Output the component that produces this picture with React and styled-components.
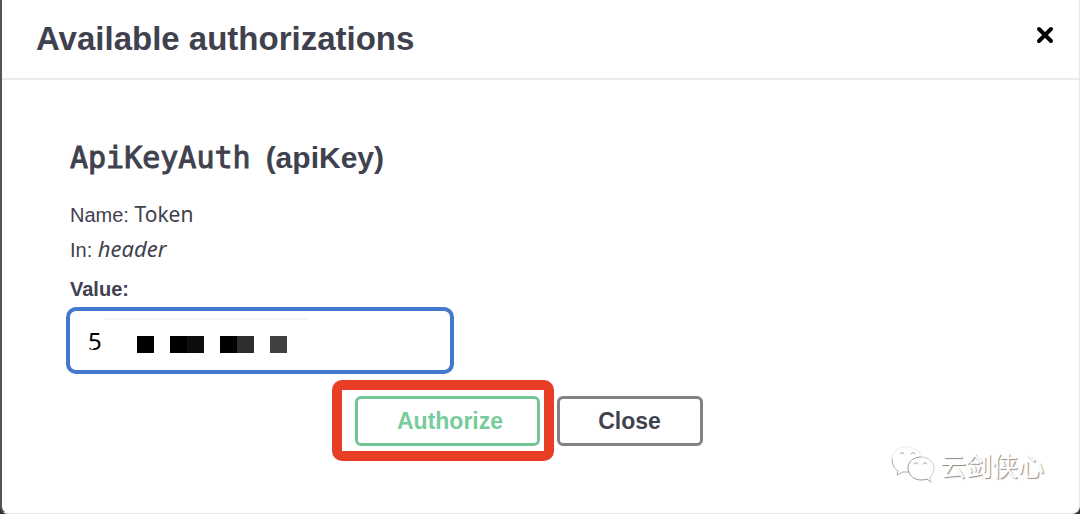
import React, { useState } from "react";
import styled, { createGlobalStyle } from "styled-components";

const GlobalStyle = createGlobalStyle`
  *, *::before, *::after { box-sizing: border-box; }
  body {
    margin: 0;
    background: #333336;
    color: #3f424e;
    font-family: "Liberation Sans", Arial, sans-serif;
  }
`;

const Modal = styled.main`
  position: relative;
  display: flex;
  flex-direction: column;
  min-height: 100vh;
  background: #fff;
  border: solid #e6e6e6;
  border-width: 0 1px 1px 0;
  border-left: 2px solid #555558;
  border-radius: 0 0 8px 8px;
`;

const Header = styled.header`
  display: flex;
  align-items: flex-start;
  justify-content: space-between;
  height: 80px;
  padding: 18px 24px 0 34px;
  border-bottom: 2px solid #ebebeb;
`;

const Title = styled.h1`
  margin: 0;
  font-size: 33px;
  line-height: 42px;
`;

const IconButton = styled.button`
  display: flex;
  align-items: center;
  height: 34px;
  padding: 0;
  border: 0;
  background: none;
  color: #000;
  cursor: pointer;
`;

const Form = styled.form`
  display: flex;
  flex-direction: column;
  align-items: flex-start;
  padding: 56px 64px 0;
`;

const SchemeTitle = styled.h2`
  display: flex;
  align-items: baseline;
  gap: 15px;
  margin: 0 0 18px 4px;
  font-size: 30px;
  line-height: 44px;
`;

const SchemeName = styled.code`
  font-family: "DejaVu Sans Mono", monospace;
  font-weight: 400;
  line-height: 40px;
  -webkit-text-stroke: 1px currentColor;
`;

const Detail = styled.p`
  margin: 0 0 0 4px;
  font-size: 20px;
  line-height: 35px;
`;

const DetailValue = styled.code`
  font-family: "Noto Sans", sans-serif;
  font-size: ${(p) => (p.$italic ? "22px" : "21px")};
  line-height: 24px;
  font-style: ${(p) => (p.$italic ? "italic" : "normal")};
`;

const Label = styled.label`
  margin: 7px 0 4px 4px;
  font-size: 20px;
  font-weight: 700;
  line-height: 28px;
`;

const Field = styled.div`
  position: relative;
  width: 100%;
  max-width: 388px;
`;

const Input = styled.input`
  display: block;
  width: 100%;
  height: 67px;
  padding: 0 18px;
  border: 4px solid #4478cc;
  border-radius: 10px;
  outline: 0;
  background: #fff;
  color: #000;
  font: 24px/28px "Noto Sans", sans-serif;
`;

const Mask = styled.svg`
  position: absolute;
  top: 0;
  left: 0;
  pointer-events: none;
`;

const Actions = styled.div`
  display: flex;
  justify-content: center;
  gap: 17px;
  width: 100%;
  padding: 22px 24px 60px 0;
`;

const Highlight = styled.div`
  position: relative;
  &::after {
    content: "";
    position: absolute;
    inset: -16px -14px -15px -23px;
    border: 10px solid #e83e26;
    border-radius: 10px;
    pointer-events: none;
  }
`;

const Button = styled.button`
  min-width: ${(p) => (p.$primary ? "185px" : "146px")};
  height: 50px;
  padding: ${(p) => (p.$primary ? "0 32px 0 38px" : "0 32px")};
  border: 3px solid ${(p) => (p.$primary ? "#73c596" : "#838183")};
  border-radius: 6px;
  background: #fff;
  color: ${(p) => (p.$primary ? "#76cc9b" : "#3f424e")};
  font: 700 23px/28px "Liberation Sans", Arial, sans-serif;
  cursor: pointer;
`;

const Watermark = styled.div`
  position: absolute;
  right: 35px;
  bottom: 29px;
  display: flex;
  align-items: flex-start;
  gap: 5px;
  color: #fff;
  font: 26px/38px "Noto Sans CJK SC", sans-serif;
  text-shadow: 1px 1px 1px #888;
`;

function WeChatMark() {
  return (
    <svg width="44" height="38" viewBox="0 0 44 38" fill="none" stroke="#aaa" strokeWidth="1" strokeLinecap="round" aria-hidden="true">
      <path d="M30 9C28 4 22 1 15 1C7 1 1 6 1 13" stroke="#ececec" />
      <path d="M1 13c0 6 2 9 6 12l-1 4 6-3h6" />
      <path d="M30 11c-8 0-13 5-13 11s5 12 13 12q3 0 6-1l4 3" stroke="#999" />
      <path d="M40 36l-1-5c3-3 4-5 4-9 0-6-6-11-13-11" stroke="#ccc" />
      <path d="M9 8q2-3 4 0M20 8q2-3 4 0M23 18q2-3 4 0M32 18q2-3 4 0" />
    </svg>
  );
}

export default function App() {
  const [value, setValue] = useState("5");
  return (
    <>
      <GlobalStyle />
      <Modal>
        <Header>
          <Title>Available authorizations</Title>
          <IconButton type="button" aria-label="Close dialog">
            <svg width="20" height="20" viewBox="0 0 20 20" stroke="currentColor" strokeWidth="4" strokeLinecap="round">
              <path d="M4 4L16 16M16 4L4 16" />
            </svg>
          </IconButton>
        </Header>
        <Form onSubmit={(e) => e.preventDefault()}>
          <SchemeTitle>
            <SchemeName>ApiKeyAuth</SchemeName>
            <span>(apiKey)</span>
          </SchemeTitle>
          <Detail>Name: <DetailValue>Token</DetailValue></Detail>
          <Detail>In: <DetailValue $italic>header</DetailValue></Detail>
          <Label htmlFor="api-key">Value:</Label>
          <Field>
            <Input id="api-key" value={value} onChange={(e) => setValue(e.target.value)} />
            <Mask width="244" height="60" viewBox="0 0 244 60" aria-hidden="true">
              <path d="M38 12H242" stroke="#e4ebf6" />
              <path d="M71 29h17v17h-17zM104 29h17v17h-17zM154 29h17v17h-17z" fill="#000" />
              <path d="M121 29h17v17h-17z" fill="#0c0c0c" />
              <path d="M171 29h17v17h-17z" fill="#2e2e2e" />
              <path d="M204 29h17v17h-17z" fill="#414141" />
              <path d="M21 37l6 5" stroke="#fff" strokeWidth="2" />
            </Mask>
          </Field>
          <Actions>
            <Highlight>
              <Button type="submit" $primary>Authorize</Button>
            </Highlight>
            <Button type="button">Close</Button>
          </Actions>
        </Form>
        <Watermark>
          <WeChatMark />
          <span>云剑侠心</span>
        </Watermark>
      </Modal>
    </>
  );
}
